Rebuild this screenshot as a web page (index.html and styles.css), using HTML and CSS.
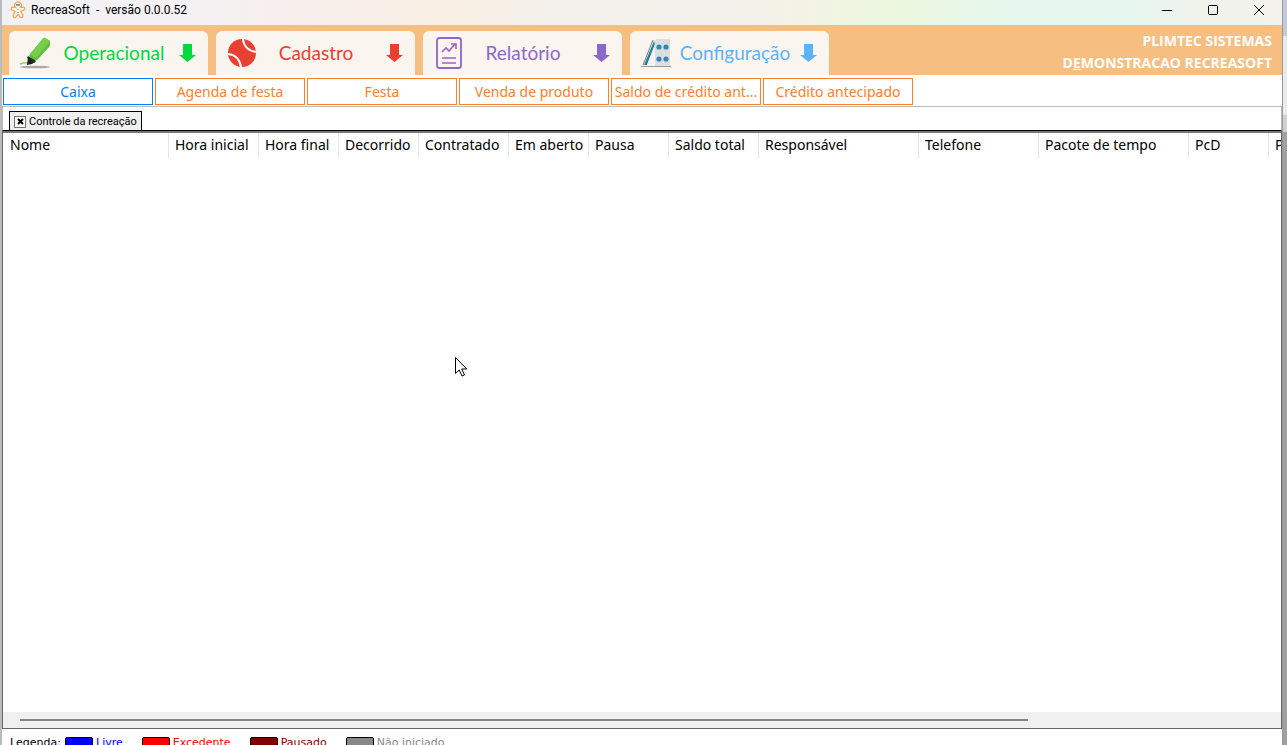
FILE: index.html
```html
<!DOCTYPE html>
<html lang="pt-BR">
<head>
    <meta charset="UTF-8">
    <meta name="viewport" content="width=device-width, initial-scale=1.0">
    <title>RecreaSoft</title>
    <link rel="stylesheet" href="styles.css">
</head>
<body>
    <div class="window">
        <!-- Title bar -->
        <div class="title-bar">
            <svg class="app-icon" viewBox="0 0 16 18" fill="#fff8ee" stroke="#f6a45c" stroke-width="1.3">
                <path d="M5.5 6.5A3.3 3.3 0 1 1 10.500 6.500L13.500 6.200Q15.300 7 14.300 8.800L10.800 10.500L13 14.500Q12.800 17 10.500 16.500L8 13.500L5.500 16.500Q3.200 17 3 14.500L5.200 10.500L1.700 8.800Q.7 7 2.500 6.200Z"/>
                <circle cx="7" cy="4" r=".3" stroke="#666"/><circle cx="9" cy="4" r=".3" stroke="#666"/>
                <path d="M8 8v1M8 11v1" stroke="#55c59a"/>
            </svg>
            <span class="app-name">RecreaSoft&nbsp; -&nbsp; versão 0.0.0.52</span>
            <div class="window-buttons">
                <button aria-label="Minimizar"><svg viewBox="0 0 12 12"><path d="M1 6.500h10"/></svg></button>
                <button aria-label="Maximizar"><svg viewBox="0 0 12 12"><rect x="1.500" y="1.500" width="9" height="9" rx="1"/></svg></button>
                <button aria-label="Fechar"><svg viewBox="0 0 12 12"><path d="M1 1l10 10M11 1L1 11"/></svg></button>
            </div>
        </div>

        <!-- Main menu -->
        <header class="main-menu">
            <nav class="menu-tabs">
                <button class="menu-tab green">
                    <svg class="menu-icon" viewBox="0 0 32 32">
                        <ellipse cx="16" cy="30" rx="15" ry="1.300" fill="#aaa"/>
                        <path d="M1 27q6-2 10-.5" fill="none" stroke="#8edb45" stroke-width="1.500"/>
                        <path d="M9 20l7 5-3 2-5 1z" fill="#222"/>
                        <path d="M11 17L24 1.500q1-1 2-.5l5 3v5L18 23l-3 1-5-5z" fill="#5fbd3c"/>
                        <path d="M24 1.500q1-1 2-.5l5 3-14 17-6-4z" fill="#76cf4b"/>
                        <path d="M9 19l8 5-2 2-7-5z" fill="#222b26"/>
                    </svg>
                    <span>Operacional</span>
                    <svg class="arrow" viewBox="0 0 18 18"><path d="M4 0h9v11h4l-8.500 7L0 11h4z"/></svg>
                </button>
                <button class="menu-tab red">
                    <svg class="menu-icon" viewBox="0 0 32 32">
                        <circle cx="16" cy="16" r="14" fill="#ea4033"/>
                        <path d="M17 2q1 11 13 13M2 17q11 1 13 13" fill="none" stroke="#fff" stroke-width="2"/>
                    </svg>
                    <span>Cadastro</span>
                    <svg class="arrow" viewBox="0 0 18 18"><path d="M4 0h9v11h4l-8.500 7L0 11h4z"/></svg>
                </button>
                <button class="menu-tab purple">
                    <svg class="menu-icon" viewBox="0 0 32 32" fill="none" stroke="#a75fc8" stroke-width="1.600">
                        <rect x="4" y="1" width="24" height="30" rx="2.500" stroke="#8b68cc" stroke-width="1.800"/>
                        <path d="M9 15l4-4 3 3 6-7M18 7h5v5M9 21h14M9 26h14"/>
                    </svg>
                    <span>Relatório</span>
                    <svg class="arrow" viewBox="0 0 18 18"><path d="M4 0h9v11h4l-8.500 7L0 11h4z"/></svg>
                </button>
                <button class="menu-tab blue">
                    <svg class="menu-icon" viewBox="0 0 32 32">
                        <path d="M1 29h30v1H1z" fill="#999"/>
                        <path d="M14 4l3-2h13v27H15z" fill="#dcdee0"/>
                        <path d="M14 4L4 28h3L15 8z" fill="#287fa5"/>
                        <path d="M13 3L3 28" stroke="#777" fill="none"/>
                        <path d="M15 7L7 28h8z" fill="#f5f5f5"/>
                        <g fill="#3288b3"><circle cx="19" cy="10" r="2.600"/><circle cx="26" cy="10" r="2.600"/><circle cx="19" cy="22" r="2.600"/><circle cx="26" cy="22" r="2.600"/></g>
                    </svg>
                    <span>Configuração</span>
                    <svg class="arrow" viewBox="0 0 18 18"><path d="M4 0h9v11h4l-8.500 7L0 11h4z"/></svg>
                </button>
            </nav>
            <div class="company">
                <div>PLIMTEC SISTEMAS</div>
                <div>D<u>E</u>MONSTRACAO RECREASOFT</div>
            </div>
        </header>

        <!-- Submenu -->
        <nav class="submenu">
            <button class="active">Caixa</button>
            <button>Agenda de festa</button>
            <button>Festa</button>
            <button>Venda de produto</button>
            <button>Saldo de crédito ant...</button>
            <button>Crédito antecipado</button>
        </nav>

        <!-- Open pages -->
        <div class="page-tabs">
            <div class="page-tab">
                <button class="close-tab" aria-label="Fechar aba"><svg viewBox="0 0 7 7"><path d="M1 1l5 5M6 1L1 6"/></svg></button>
                <span>Controle da recreação</span>
            </div>
        </div>

        <main class="list">
            <div class="list-body">
                <table>
                    <colgroup>
                        <col class="w166"><col class="w90"><col class="w80"><col class="w80"><col class="w90"><col class="w80"><col class="w80"><col class="w90"><col class="w160"><col class="w120"><col class="w150"><col class="w80"><col class="w80">
                    </colgroup>
                    <thead>
                        <tr>
                            <th>Nome</th>
                            <th>Hora inicial</th>
                            <th>Hora final</th>
                            <th>Decorrido</th>
                            <th>Contratado</th>
                            <th>Em aberto</th>
                            <th>Pausa</th>
                            <th>Saldo total</th>
                            <th>Responsável</th>
                            <th>Telefone</th>
                            <th>Pacote de tempo</th>
                            <th>PcD</th>
                            <th>P</th>
                        </tr>
                    </thead>
                </table>
            </div>
            <div class="scrollbar"><div class="thumb"></div></div>
        </main>

        <!-- Legend -->
        <footer class="legend">
            <span class="legend-title">Legenda:</span>
            <span class="legend-item free"><i></i>Livre</span>
            <span class="legend-item exceeded"><i></i>Excedente</span>
            <span class="legend-item paused"><i></i>Pausado</span>
            <span class="legend-item not-started"><i></i>Não iniciado</span>
        </footer>
    </div>
    <div class="desktop-edge"></div>

    <svg class="cursor" viewBox="0 0 12 20"><path d="M.5.5v16l3.700-3.500 2.800 6 2.500-1-2.800-6h5z"/></svg>
</body>
</html>
```
FILE: styles.css
```css
* {
    margin: 0;
    padding: 0;
    box-sizing: border-box;
}

body {
    display: flex;
    height: 100vh;
    overflow: hidden;
    font-family: "Noto Sans", sans-serif;
    background: #fff;
    color: #000;
}

button {
    font: inherit;
    border: 0;
    background: none;
}

.window {
    flex: 1;
    min-width: 0;
    display: flex;
    flex-direction: column;
    border-left: 2px solid #bbb;
}

.desktop-edge {
    width: 5px;
    border-left: 1px solid #999;
    background: linear-gradient(#c3cad6 36px, #ebebeb 36px, #ebebeb 115px, #d0d0d0 115px, #d0d0d0 132px, #a0a0a0 132px);
}

/* Title bar */
.title-bar {
    flex: none;
    display: flex;
    align-items: center;
    height: 25px;
    padding: 0 8px 6px 8px;
    background: linear-gradient(90deg, #f2f2f4, #f4f1f3 16%, #f8eeea 25%, #f9eee2 35%, #f3f1eb 43%, #f4f0eb 57%, #f2f4e3 64%, #ebf7df 70%, #e6f7ec 78%, #e5f7ee 88%, #f0f2ec 93%, #f3f2ed);
}

.app-icon {
    width: 16px;
    height: 18px;
}

.app-name {
    margin-left: 5px;
    font-family: Roboto, sans-serif;
    font-size: 12px;
    line-height: 18px;
}

.window-buttons {
    display: flex;
    margin-left: auto;
}

.window-buttons button {
    width: 46px;
    height: 18px;
    display: flex;
    align-items: center;
    justify-content: center;
}

.window-buttons button:last-child {
    width: 30px;
    margin-left: 8px;
}

.window-buttons svg {
    width: 12px;
    height: 12px;
    fill: none;
    stroke: #000;
}

/* Main menu */
.main-menu {
    flex: none;
    display: flex;
    justify-content: space-between;
    align-items: flex-end;
    height: 50px;
    padding: 0 10px 0 7px;
    background: #f6be81;
}

.menu-tabs {
    display: flex;
    gap: 8px;
}

.menu-tab {
    display: flex;
    align-items: center;
    width: 199px;
    height: 44px;
    padding: 0 11px 0 10px;
    border-radius: 6px 6px 0 0;
    background: #faf5ee;
    font-family: Lato, sans-serif;
    font-size: 19px;
    line-height: 24px;
}

.menu-tab span {
    flex: 1;
    padding-right: 2px;
    text-align: center;
}

.red span,
.purple span {
    padding-right: 12px;
}

.menu-icon {
    flex: none;
    width: 32px;
    height: 32px;
}

.arrow {
    flex: none;
    width: 18px;
    height: 18px;
    fill: currentColor;
}

.green { color: #00d93d; }
.red { color: #ea4033; }
.purple { color: #8b68cc; }
.blue { color: #5cb3fd; }

.company {
    align-self: center;
    padding-top: 4px;
    color: #fff;
    font-family: "Open Sans", sans-serif;
    font-size: 14px;
    font-weight: 700;
    line-height: 22px;
    text-align: right;
}

/* Submenu */
.submenu {
    flex: none;
    display: flex;
    gap: 2px;
    padding: 3px 1px 1px;
}

.submenu button {
    width: 150px;
    height: 27px;
    border: 1px solid #ff7f27;
    color: #ff7f27;
    font-size: 14px;
    line-height: 20px;
    white-space: nowrap;
}

.submenu .active {
    border-color: #0080ff;
    color: #0080ff;
}

/* Open pages */
.page-tabs {
    flex: none;
    display: flex;
    align-items: flex-end;
    height: 25px;
    padding-left: 6px;
    border: 1px solid #bbb;
    border-bottom-color: #000;
}

.page-tab {
    display: flex;
    align-items: center;
    gap: 3px;
    width: 133px;
    height: 19px;
    padding: 1px 0 0 4px;
    border: 1px solid #000;
    border-bottom: 0;
    background: #f0f0f0;
    font-family: Roboto, sans-serif;
    font-size: 11px;
    line-height: 16px;
    white-space: nowrap;
}

.close-tab {
    flex: none;
    display: flex;
    align-items: center;
    justify-content: center;
    width: 12px;
    height: 12px;
    border: 1px solid #777;
    background: #fff;
}

.close-tab svg {
    width: 7px;
    height: 7px;
    fill: none;
    stroke: #000;
    stroke-width: 2;
}

/* List */
.list {
    flex: 1;
    min-height: 0;
    display: flex;
    flex-direction: column;
    border: 1px solid #666;
    border-top: 2px solid #777;
}

.list-body {
    flex: 1;
    overflow: hidden;
}

table {
    width: 1346px;
    table-layout: fixed;
    border-collapse: separate;
    border-spacing: 0;
}

th {
    height: 25px;
    padding: 0 0 2px 6px;
    border-right: 1px solid #e5e5e5;
    font-size: 14px;
    font-weight: 400;
    line-height: 20px;
    text-align: left;
    white-space: nowrap;
}

th:first-child {
    padding-left: 7px;
}

.w80 { width: 80px; }
.w90 { width: 90px; }
.w120 { width: 120px; }
.w150 { width: 150px; }
.w160 { width: 160px; }
.w166 { width: 166px; }

.scrollbar {
    flex: none;
    height: 16px;
    padding: 7px 17px;
    background: #f0f0f0;
}

.thumb {
    width: 81%;
    height: 2px;
    background: #858585;
}

/* Legend */
.legend {
    flex: none;
    display: flex;
    height: 16px;
    padding: 7px 8px 0;
    overflow: hidden;
    font-family: "DejaVu Sans", sans-serif;
    font-size: 11px;
    line-height: 14px;
}

.legend-title {
    width: 55px;
}

.legend-item {
    display: flex;
    gap: 3px;
    margin-right: 19px;
}

.legend-item i {
    width: 28px;
    height: 14px;
    margin-top: 1px;
    border: 1px solid #000;
    border-radius: 2px;
    background: currentColor;
}

.free { color: #00f; }
.exceeded { color: #f00; }
.paused { color: #800000; }
.not-started { color: #888; }

.cursor {
    position: absolute;
    left: 455px;
    top: 357px;
    width: 12px;
    height: 20px;
    fill: #fff;
    stroke: #000;
}
```
